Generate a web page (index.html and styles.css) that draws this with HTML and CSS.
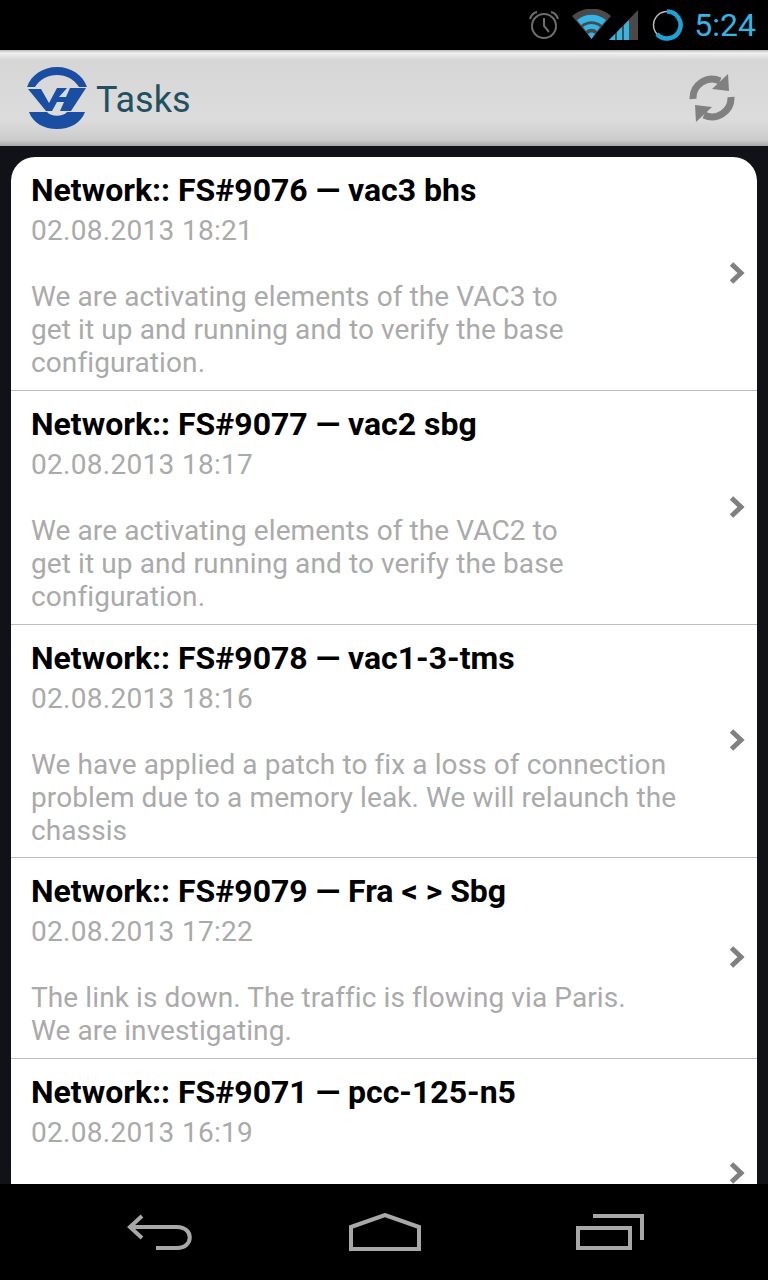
FILE: index.html
```html
<!DOCTYPE html>
<html lang="en">
<head>
<meta charset="utf-8">
<title>Tasks</title>
<link rel="stylesheet" href="styles.css">
</head>
<body>
<div class="screen">
  <div class="status">
    <svg class="st-alarm" width="32" height="30" viewBox="0 0 32 30" fill="none" stroke="#6e6e6e">
      <circle cx="16" cy="16" r="12" stroke-width="2"/>
      <path d="M16 8v8l5 6" stroke-width="2"/>
      <path d="M2 9C3 5 5 3 9 2M30 9C29 5 27 3 23 2" stroke-width="2"/>
    </svg>
    <svg class="st-signal" width="66" height="32" viewBox="0 0 66 32">
      <path d="M0 7C12-3 28-3 39 7L19.500 30Z" fill="#4a4a4a"/>
      <path d="M5 11C14 4 25 4 34 11L30 16C23 11 16 11 9 16Z" fill="#33b5e5"/>
      <path d="M11 18C16 14 23 14 28 18L25 22C22 19 17 19 14 22Z" fill="#33b5e5"/>
      <path d="M16 25C18 23 21 23 23 25L19.500 30Z" fill="#33b5e5"/>
      <path d="M37 31L66 1V31Z" fill="#4a4a4a"/>
      <path d="M37 31L43 25V31ZM45 31V23L50 18V31ZM52 31V16L57 11V31Z" fill="#33b5e5"/>
    </svg>
    <svg class="st-battery" width="32" height="32" viewBox="0 0 32 32" fill="none">
      <circle cx="16" cy="16" r="13.500" stroke="#b8b8b8" stroke-width="1.500"/>
      <path d="M16 2.500A13.500 13.500 0 1 1 6 25" stroke="#1ea3d8" stroke-width="4.500"/>
    </svg>
    <span class="clock">5:24</span>
  </div>
  <header class="bar">
    <div class="brand">
      <svg class="logo" width="60" height="62" viewBox="0 0 60 62" fill="#1a4ea3">
        <path d="M0 20C4 8 16 0 30 0S56 8 60 20H52C47 12 39 8 30 8S13 12 8 20Z"/>
        <path d="M1 22H14L22 36L30 21H40L32 30H39L43 21H59L44 44H33L37 35H30L25 44H19Z"/>
        <path d="M2 45H20C24 50 36 50 40 45H58C54 56 43 62 30 62S6 56 2 45Z"/>
      </svg>
      <span class="title">Tasks</span>
    </div>
    <svg class="refresh" width="46" height="48" viewBox="0 0 46 48" fill="none">
      <path d="M4 25A19 19 0 0 1 31 7" stroke="#808080" stroke-width="7"/>
      <path d="M23 15L40 17L39 0Z" fill="#808080"/>
      <path d="M42 23A19 19 0 0 1 15 41" stroke="#808080" stroke-width="7"/>
      <path d="M23 33L6 31L7 48Z" fill="#808080"/>
    </svg>
  </header>
  <main class="content">
    <section class="card">
      <article class="row row-a">
        <div class="text">
          <h2>Network:: FS#9076 — vac3 bhs</h2>
          <p class="date">02.08.2013 18:21</p>
          <p class="desc">We are activating elements of the VAC3 to<br>get it up and running and to verify the base<br>configuration.</p>
        </div>
        <svg class="chev" width="18" height="24" viewBox="0 0 18 24" fill="none"><path d="M3.500 3L13 12L3.500 21" stroke="#808080" stroke-width="5"/></svg>
      </article>
      <article class="row row-a">
        <div class="text">
          <h2>Network:: FS#9077 — vac2 sbg</h2>
          <p class="date">02.08.2013 18:17</p>
          <p class="desc">We are activating elements of the VAC2 to<br>get it up and running and to verify the base<br>configuration.</p>
        </div>
        <svg class="chev" width="18" height="24" viewBox="0 0 18 24" fill="none"><path d="M3.500 3L13 12L3.500 21" stroke="#808080" stroke-width="5"/></svg>
      </article>
      <article class="row row-b">
        <div class="text">
          <h2>Network:: FS#9078 — vac1-3-tms</h2>
          <p class="date">02.08.2013 18:16</p>
          <p class="desc">We have applied a patch to fix a loss of connection<br>problem due to a memory leak. We will relaunch the<br>chassis</p>
        </div>
        <svg class="chev" width="18" height="24" viewBox="0 0 18 24" fill="none"><path d="M3.500 3L13 12L3.500 21" stroke="#808080" stroke-width="5"/></svg>
      </article>
      <article class="row row-c">
        <div class="text">
          <h2>Network:: FS#9079 — Fra &lt; &gt; Sbg</h2>
          <p class="date">02.08.2013 17:22</p>
          <p class="desc">The link is down. The traffic is flowing via Paris.<br>We are investigating.</p>
        </div>
        <svg class="chev" width="18" height="24" viewBox="0 0 18 24" fill="none"><path d="M3.500 3L13 12L3.500 21" stroke="#808080" stroke-width="5"/></svg>
      </article>
      <article class="row row-last">
        <div class="text">
          <h2>Network:: FS#9071 — pcc-125-n5</h2>
          <p class="date">02.08.2013 16:19</p>
        </div>
        <svg class="chev" width="18" height="24" viewBox="0 0 18 24" fill="none"><path d="M3.500 3L13 12L3.500 21" stroke="#808080" stroke-width="5"/></svg>
      </article>
    </section>
  </main>
  <nav class="nav">
    <svg width="66" height="36" viewBox="0 0 66 36" fill="none" stroke="#a8a8a8" stroke-width="4">
      <path d="M15 2L3 13L15 24M3 13H50C67 13 67 34 50 34H29"/>
    </svg>
    <svg width="72" height="38" viewBox="0 0 72 38" fill="none" stroke="#a8a8a8" stroke-width="4">
      <path d="M2 14L36 2L70 14V36H2Z"/>
    </svg>
    <svg width="68" height="36" viewBox="0 0 68 36" fill="none" stroke="#a8a8a8" stroke-width="4">
      <path d="M2 14H54V34H2Z"/>
      <path d="M17 2H66V26"/>
    </svg>
  </nav>
</div>
</body>
</html>
```
FILE: styles.css
```css
* { box-sizing: border-box; }
html, body { margin: 0; padding: 0; }
body { font-family: Roboto, sans-serif; background: #000; }
.screen { width: 768px; height: 1280px; display: flex; flex-direction: column; overflow: hidden; }
.status { height: 50px; background: #000; display: flex; align-items: center; justify-content: flex-end; padding-right: 12px; flex: none; }
.st-alarm { margin-right: 12px; }
.st-signal { margin-right: 13px; }
.st-battery { margin-right: 11px; }
.clock { color: #33b5e5; font-size: 32px; line-height: 36px; }
.bar { height: 96px; flex: none; display: flex; align-items: center; justify-content: space-between; padding: 0 33px 0 27px; background: linear-gradient(#b8b8b8 0, #f0f0f0 3px, #d6d6d6 10px, #dcdcdc 70px, #cccccc 90px, #a8a8a8 96px); }
.brand { display: flex; align-items: center; gap: 9px; }
.title { color: #23505f; font-size: 36px; line-height: 44px; padding-top: 4px; }
.content { flex: 1; min-height: 0; background: #101218; padding: 11px 11px 0; overflow: hidden; }
.card { background: #fff; border-radius: 24px 24px 0 0; height: 100%; overflow: hidden; }
.row { display: flex; align-items: center; justify-content: space-between; padding-left: 20px; padding-right: 11px; border-bottom: 1px solid #bdbdbd; }
.row-a { height: 234px; }
.row-b { height: 233px; }
.row-c { height: 201px; }
.row-last { border-bottom: 0; height: 230px; }
.text { align-self: flex-start; padding-top: 13px; }
.chev { margin-bottom: 2px; }
h2 { margin: 0; font-size: 32px; font-weight: 700; line-height: 40px; color: #000; }
.date { margin: 1px 0 0; font-size: 28px; letter-spacing: 0.3px; line-height: 40px; color: #aaa; }
.desc { margin: 29px 0 0; font-size: 28px; letter-spacing: 0.1px; line-height: 33px; color: #aaa; }
.nav { height: 96px; flex: none; background: #000; display: flex; align-items: center; justify-content: space-between; padding: 0 124px 0 127px; }
```
